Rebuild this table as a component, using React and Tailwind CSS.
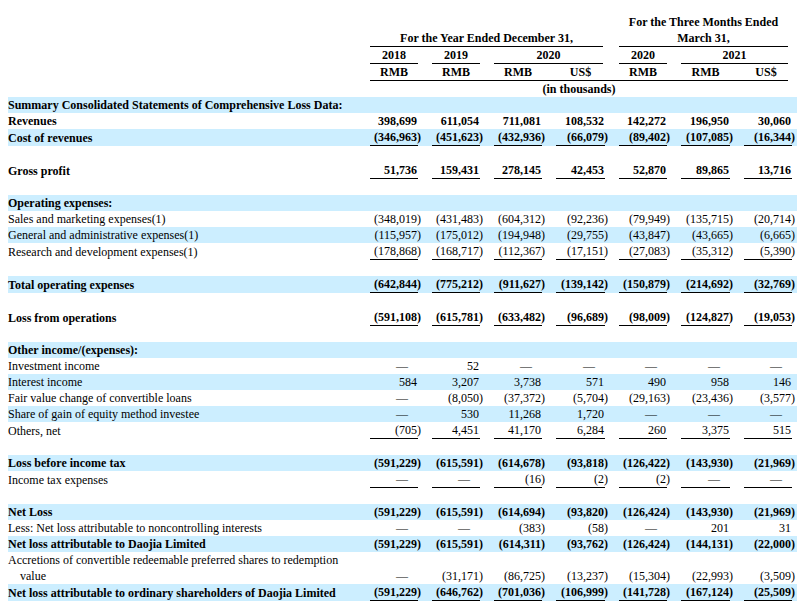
const COLS = "grid grid-cols-[348px_62px_62px_62px_63px_62px_63px_62px]";

const rows = [
  { label: "Summary Consolidated Statements of Comprehensive Loss Data:", bold: true, band: true },
  { label: "Revenues", bold: true, values: ["398,699", "611,054", "711,081", "108,532", "142,272", "196,950", "30,060"] },
  { label: "Cost of revenues", bold: true, band: true, line: true, values: ["(346,963)", "(451,623)", "(432,936)", "(66,079)", "(89,402)", "(107,085)", "(16,344)"] },
  { spacer: true },
  { label: "Gross profit", bold: true, line: true, values: ["51,736", "159,431", "278,145", "42,453", "52,870", "89,865", "13,716"] },
  { spacer: true },
  { label: "Operating expenses:", bold: true, band: true },
  { label: "Sales and marketing expenses(1)", values: ["(348,019)", "(431,483)", "(604,312)", "(92,236)", "(79,949)", "(135,715)", "(20,714)"] },
  { label: "General and administrative expenses(1)", band: true, values: ["(115,957)", "(175,012)", "(194,948)", "(29,755)", "(43,847)", "(43,665)", "(6,665)"] },
  { label: "Research and development expenses(1)", line: true, values: ["(178,868)", "(168,717)", "(112,367)", "(17,151)", "(27,083)", "(35,312)", "(5,390)"] },
  { spacer: true },
  { label: "Total operating expenses", bold: true, band: true, line: true, values: ["(642,844)", "(775,212)", "(911,627)", "(139,142)", "(150,879)", "(214,692)", "(32,769)"] },
  { spacer: true },
  { label: "Loss from operations", bold: true, line: true, values: ["(591,108)", "(615,781)", "(633,482)", "(96,689)", "(98,009)", "(124,827)", "(19,053)"] },
  { spacer: true },
  { label: "Other income/(expenses):", bold: true, band: true },
  { label: "Investment income", values: ["—", "52", "—", "—", "—", "—", "—"] },
  { label: "Interest income", band: true, values: ["584", "3,207", "3,738", "571", "490", "958", "146"] },
  { label: "Fair value change of convertible loans", values: ["—", "(8,050)", "(37,372)", "(5,704)", "(29,163)", "(23,436)", "(3,577)"] },
  { label: "Share of gain of equity method investee", band: true, values: ["—", "530", "11,268", "1,720", "—", "—", "—"] },
  { label: "Others, net", line: true, values: ["(705)", "4,451", "41,170", "6,284", "260", "3,375", "515"] },
  { spacer: true },
  { label: "Loss before income tax", bold: true, band: true, values: ["(591,229)", "(615,591)", "(614,678)", "(93,818)", "(126,422)", "(143,930)", "(21,969)"] },
  { label: "Income tax expenses", line: true, values: ["—", "—", "(16)", "(2)", "(2)", "—", "—"] },
  { spacer: true },
  { label: "Net Loss", bold: true, band: true, values: ["(591,229)", "(615,591)", "(614,694)", "(93,820)", "(126,424)", "(143,930)", "(21,969)"] },
  { label: "Less: Net loss attributable to noncontrolling interests", values: ["—", "—", "(383)", "(58)", "—", "201", "31"] },
  { label: "Net loss attributable to Daojia Limited", bold: true, band: true, values: ["(591,229)", "(615,591)", "(614,311)", "(93,762)", "(126,424)", "(144,131)", "(22,000)"] },
  { label: "Accretions of convertible redeemable preferred shares to redemption", wrap: "value", values: ["—", "(31,171)", "(86,725)", "(13,237)", "(15,304)", "(22,993)", "(3,509)"] },
  { label: "Net loss attributable to ordinary shareholders of Daojia Limited", bold: true, band: true, line: true, values: ["(591,229)", "(646,762)", "(701,036)", "(106,999)", "(141,728)", "(167,124)", "(25,509)"] },
];

function Num({ v }) {
  if (v === "—") return <span className="pr-[10px]">—</span>;
  if (v.startsWith("(")) {
    return (
      <span className="pr-px">
        {v.slice(0, -1)}
        <span className="inline-block w-0">)</span>
      </span>
    );
  }
  return <span className="pr-px">{v}</span>;
}

function Row({ row }) {
  if (row.spacer) return <div className="h-4" />;
  return (
    <div className={`${COLS} w-[789px] pr-[5px] items-end ${row.band ? "bg-[#cceeff]" : ""} ${row.bold ? "font-bold" : ""}`}>
      <div className="whitespace-nowrap">
        {row.label}
        {row.wrap && <div className="pl-3">{row.wrap}</div>}
      </div>
      {(row.values || []).map((v, i) => (
        <div key={i} className="pl-[14px]">
          <div className={`text-right whitespace-nowrap ${row.line ? "border-b border-black" : ""}`}>
            <Num v={v} />
          </div>
        </div>
      ))}
    </div>
  );
}

export default function App() {
  return (
    <div className="bg-white w-[805px] h-[615px] overflow-hidden pt-[14px] pl-2 text-black text-[12px] leading-4 font-['Liberation_Serif',serif]">
      {/* column headings */}
      <div className={`${COLS} w-[789px] font-bold`}>
        <div className="col-span-5" />
        <div className="col-span-3 pl-[14px] pr-1 text-center">For the Three Months Ended</div>
      </div>
      <div className={`${COLS} w-[789px] font-bold`}>
        <div />
        <div className="col-span-4 pl-[14px] pr-[2px]">
          <div className="border-b border-black text-center">For the Year Ended December 31,</div>
        </div>
        <div className="col-span-3 pl-[14px] pr-1">
          <div className="border-b border-black text-center">March 31,</div>
        </div>
      </div>
      <div className={`${COLS} w-[789px] font-bold`}>
        <div />
        <div className="pl-[14px]"><div className="border-b border-black text-center">2018</div></div>
        <div className="pl-[14px]"><div className="border-b border-black text-center">2019</div></div>
        <div className="col-span-2 pl-[14px] pr-[2px]"><div className="border-b border-black text-center">2020</div></div>
        <div className="pl-[14px]"><div className="border-b border-black text-center">2020</div></div>
        <div className="col-span-2 pl-[14px] pr-1"><div className="border-b border-black text-center">2021</div></div>
      </div>
      <div className={`${COLS} w-[789px] font-bold`}>
        <div />
        <div className="pl-[14px]"><div className="border-b border-black text-center">RMB</div></div>
        <div className="border-b border-black pl-[14px] text-center">RMB</div>
        <div className="border-b border-black pl-[14px] text-center">RMB</div>
        <div className="border-b border-black pl-[14px] text-center">US$</div>
        <div className="border-b border-black pl-[14px] text-center">RMB</div>
        <div className="border-b border-black pl-[14px] text-center">RMB</div>
        <div className="mr-1 border-b border-black pl-[14px] text-center">US$</div>
      </div>
      <div className={`${COLS} w-[789px] font-bold`}>
        <div />
        <div className="col-span-7 pl-[14px] pr-1 text-center">(in thousands)</div>
      </div>

      {rows.map((r, i) => (
        <Row key={i} row={r} />
      ))}
    </div>
  );
}
